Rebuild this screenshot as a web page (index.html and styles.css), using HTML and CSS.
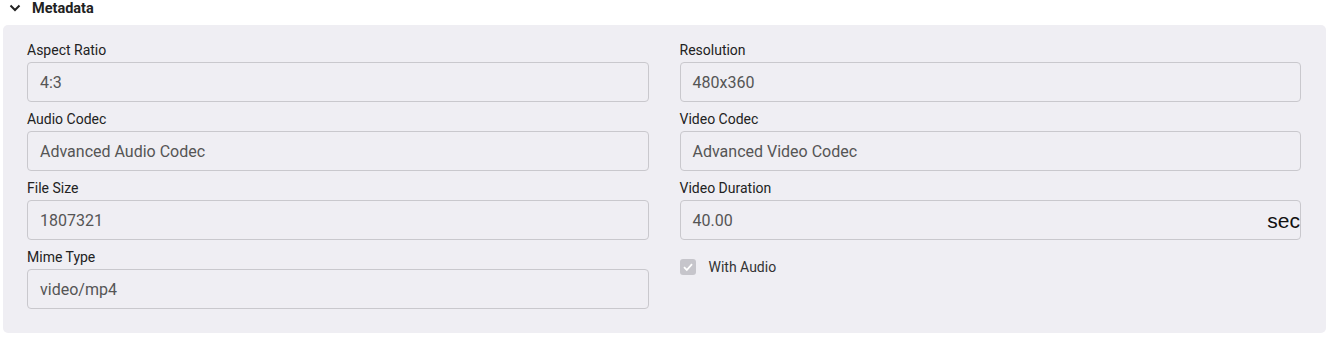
FILE: index.html
```html
<!DOCTYPE html>
<html lang="en">
<head>
  <meta charset="UTF-8" />
  <title>Metadata</title>
  <link rel="stylesheet" href="styles.css">
</head>
<body>
  <div class="encabezado">
    <svg class="chevron" width="14" height="14" viewBox="0 0 14 14"><path d="M2.5 4.5 L7 9 L11.5 4.5" fill="none" stroke="#222" stroke-width="2"/></svg>
    <span>Metadata</span>
  </div>

  <div class="panel">
    <div class="campo">
      <label>Aspect Ratio</label>
      <div class="entrada">4:3</div>
    </div>
    <div class="campo">
      <label>Resolution</label>
      <div class="entrada">480x360</div>
    </div>
    <div class="campo">
      <label>Audio Codec</label>
      <div class="entrada">Advanced Audio Codec</div>
    </div>
    <div class="campo">
      <label>Video Codec</label>
      <div class="entrada">Advanced Video Codec</div>
    </div>
    <div class="campo">
      <label>File Size</label>
      <div class="entrada">1807321</div>
    </div>
    <div class="campo">
      <label>Video Duration</label>
      <div class="entrada con-unidad">40.00<span class="unidad">sec</span></div>
    </div>
    <div class="campo">
      <label>Mime Type</label>
      <div class="entrada">video/mp4</div>
    </div>
    <div class="campo check">
      <span class="casilla"><svg width="12" height="12" viewBox="0 0 12 12"><path d="M2 6.2 L4.8 9 L10 3.2" fill="none" stroke="#fff" stroke-width="1.8"/></svg></span>
      <span>With Audio</span>
    </div>
  </div>
</body>
</html>
```

FILE: styles.css
```css
body {
  font-family: Roboto, "Liberation Sans", sans-serif;
  margin: 0;
  padding: 0 5px 0 3px;
  background: #fff;
  color: #222;
}
.encabezado {
  display: flex;
  align-items: center;
  gap: 10px;
  height: 16px;
  padding: 0 0 9px 5px;
  font-size: 14.5px;
  font-weight: bold;
  color: #222;
}
.chevron {
  display: block;
}
.panel {
  background: #efeef3;
  border-radius: 5px;
  padding: 17px 25px 15px 24px;
  display: grid;
  grid-template-columns: 1fr 1fr;
  column-gap: 31px;
}
.campo label {
  display: block;
  font-size: 14px;
  color: #222;
  height: 20px;
  line-height: 16px;
}
.entrada {
  box-sizing: border-box;
  height: 40px;
  border: 1px solid #c9c8cd;
  border-radius: 4px;
  padding: 0 12px;
  display: flex;
  align-items: center;
  font-size: 16px;
  color: #555;
  margin-bottom: 9px;
}
.con-unidad {
  justify-content: space-between;
  padding-right: 0;
}
.unidad {
  font-family: "Liberation Sans", Arial, sans-serif;
  font-size: 21px;
  color: #111;
  line-height: 20px;
  margin-top: 2px;
}
.check {
  display: flex;
  align-items: center;
  gap: 13px;
  font-size: 14px;
  color: #333;
  padding-top: 10px;
  align-self: start;
}
.casilla {
  width: 16px;
  height: 16px;
  border-radius: 3px;
  background: #c6c5cb;
  display: flex;
  align-items: center;
  justify-content: center;
}
```
